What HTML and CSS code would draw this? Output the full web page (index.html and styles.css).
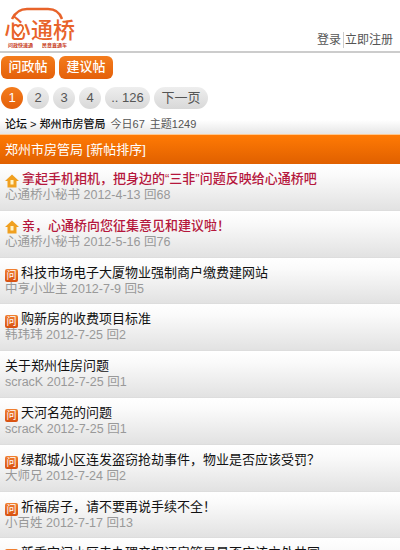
FILE: index.html
```html
<!DOCTYPE html>
<html lang="zh-CN">

<head>
    <meta charset="UTF-8">
    <meta name="viewport" content="width=device-width, initial-scale=1.0">
    <title>郑州市房管局</title>
    <link rel="stylesheet" href="styles.css">
</head>

<body>

    <!-- Logo and login links -->
    <div class="header">
        <svg class="logo" width="78" height="48" viewBox="0 0 78 48">
            <path d="M12 19 C15 13 20 9 27 9 H48 C55 9 60 13 62 19" fill="none" stroke="#e8632a" stroke-width="2.500"/>
            <text class="logo-heart" x="4" y="38">心</text>
            <path d="M18 36 C13 31 12 28 13.500 26 C15 24.500 17.500 24.500 18 27 C18.500 24.500 21 24.500 22.500 26 C24 28 23 31 18 36 Z" fill="#fff" stroke="#e8632a" stroke-width="1.800"/>
            <text class="logo-big" x="31" y="38">通</text>
            <text class="logo-big" x="53" y="38">桥</text>
            <text class="logo-small" x="8" y="46.500">问政快速通</text>
            <text class="logo-small" x="42" y="46.500">民意直通车</text>
        </svg>
        <div class="login">
            <a>登录</a><a class="register">立即注册</a>
        </div>
    </div>

    <div class="actions">
        <a class="action-btn">问政帖</a>
        <a class="action-btn">建议帖</a>
    </div>

    <div class="pager">
        <a class="page current">1</a>
        <a class="page">2</a>
        <a class="page">3</a>
        <a class="page">4</a>
        <a class="page wide">.. 126</a>
        <a class="page next">下一页</a>
    </div>

    <div class="crumbs">
        <b>论坛 &gt; 郑州市房管局</b><span>今日67</span><span>主题1249</span>
    </div>

    <div class="board-title">郑州市房管局 [新帖排序]</div>

    <ul class="topic-list">
        <li class="topic">
            <div class="topic-title sticky">
                <svg class="icon" width="14" height="14" viewBox="0 0 14 14">
                    <path d="M7 0.500 L14 7 H11.500 V13.500 H2.500 V7 H0 Z" fill="#f0a020"/>
                    <rect x="5.500" y="6" width="3" height="4.500" fill="#fff3c8"/>
                </svg>拿起手机相机，把身边的“三非”问题反映给心通桥吧
            </div>
            <div class="topic-meta">心通桥小秘书 2012-4-13 回68</div>
        </li>
        <li class="topic">
            <div class="topic-title sticky">
                <svg class="icon" width="14" height="14" viewBox="0 0 14 14">
                    <path d="M7 0.500 L14 7 H11.500 V13.500 H2.500 V7 H0 Z" fill="#f0a020"/>
                    <rect x="5.500" y="6" width="3" height="4.500" fill="#fff3c8"/>
                </svg>亲，心通桥向您征集意见和建议啦！
            </div>
            <div class="topic-meta">心通桥小秘书 2012-5-16 回76</div>
        </li>
        <li class="topic">
            <div class="topic-title"><span class="wen">问</span>科技市场电子大厦物业强制商户缴费建网站</div>
            <div class="topic-meta">中亨小业主 2012-7-9 回5</div>
        </li>
        <li class="topic">
            <div class="topic-title"><span class="wen">问</span>购新房的收费项目标准</div>
            <div class="topic-meta">韩玮玮 2012-7-25 回2</div>
        </li>
        <li class="topic">
            <div class="topic-title">关于郑州住房问题</div>
            <div class="topic-meta">scracK 2012-7-25 回1</div>
        </li>
        <li class="topic">
            <div class="topic-title"><span class="wen">问</span>天河名苑的问题</div>
            <div class="topic-meta">scracK 2012-7-25 回1</div>
        </li>
        <li class="topic">
            <div class="topic-title"><span class="wen">问</span>绿都城小区连发盗窃抢劫事件，物业是否应该受罚？</div>
            <div class="topic-meta">大师兄 2012-7-24 回2</div>
        </li>
        <li class="topic">
            <div class="topic-title"><span class="wen">问</span>祈福房子，请不要再说手续不全！</div>
            <div class="topic-meta">小百姓 2012-7-17 回13</div>
        </li>
        <li class="topic">
            <div class="topic-title"><span class="wen">问</span>新香宫门小区未办理产权证房管局是否应该立处共同</div>
        </li>
    </ul>

</body>

</html>
```

FILE: styles.css
```css
* {
    margin: 0;
    padding: 0;
    box-sizing: border-box;
}

html, body {
    height: 100%;
    overflow: hidden;
}

body {
    font-family: "Liberation Sans", "Noto Sans CJK SC", sans-serif;
    font-size: 13px;
    color: #111;
    background-color: #fff;
}

.header {
    display: flex;
    justify-content: space-between;
    align-items: flex-end;
    height: 53px;
    padding: 0 7px 3px 0;
    border-bottom: 2px solid #ccc;
}

.logo-big {
    font-size: 22px;
    font-weight: 500;
    fill: #e8632a;
}

.logo-heart {
    font-size: 27px;
    font-weight: 400;
    fill: #e8632a;
}

.logo-small {
    font-size: 5px;
    font-weight: 700;
    fill: #c8401e;
}

.login {
    display: flex;
    font-size: 12px;
    line-height: 16px;
    color: #555;
}

.register {
    margin-left: 2px;
    padding-left: 1px;
    border-left: 1px solid #ccc;
}

.actions {
    display: flex;
    gap: 4px;
    padding: 3px 1px 0;
}

.action-btn {
    width: 54px;
    height: 23px;
    line-height: 22px;
    text-align: center;
    color: #fff;
    font-weight: 500;
    border-radius: 6px;
    background: linear-gradient(#f47c1c, #e4600a);
}

.pager {
    display: flex;
    gap: 4px;
    padding: 8px 1px 0;
}

.page {
    width: 22px;
    height: 22px;
    line-height: 21px;
    text-align: center;
    color: #555;
    border-radius: 11px;
    background: linear-gradient(#eee, #d8d8d8);
}

.page.current {
    color: #fff;
    background: linear-gradient(#f47c1c, #e4600a);
}

.page.wide {
    width: 45px;
}

.page.next {
    width: 54px;
}

.crumbs {
    display: flex;
    gap: 5px;
    height: 20px;
    margin-top: 5px;
    padding-left: 5px;
    line-height: 20px;
    font-size: 11px;
    color: #555;
    background: linear-gradient(#fff 30%, #e6e6e6);
}

.crumbs b {
    font-weight: 500;
    color: #111;
}

.board-title {
    height: 30px;
    padding-left: 5px;
    line-height: 30px;
    color: #fff;
    border-top: 1px solid #ffc890;
    background: linear-gradient(#ff7a04, #e06000);
}

.topic-list {
    list-style: none;
}

.topic {
    height: 46.800px;
    padding: 7px 0 0 5px;
    border-bottom: 1px solid #ddd;
    background: linear-gradient(#fff, #fafafa 25%, #e2e2e2);
}

.topic-title {
    display: flex;
    align-items: center;
    height: 16px;
    line-height: 16px;
    white-space: nowrap;
}

.topic-title.sticky {
    color: #b5173c;
    font-weight: 500;
}

.topic-meta {
    height: 16px;
    line-height: 16px;
    font-size: 12.500px;
    color: #999;
}

.icon {
    flex: none;
    margin: 3px 3px 0 0;
}

.wen {
    flex: none;
    width: 13px;
    height: 13px;
    margin: 5px 3px 0 0;
    line-height: 13px;
    font-size: 10px;
    text-align: center;
    color: #fff;
    border-radius: 2px;
    background: linear-gradient(#f08030, #d85010);
}
```
